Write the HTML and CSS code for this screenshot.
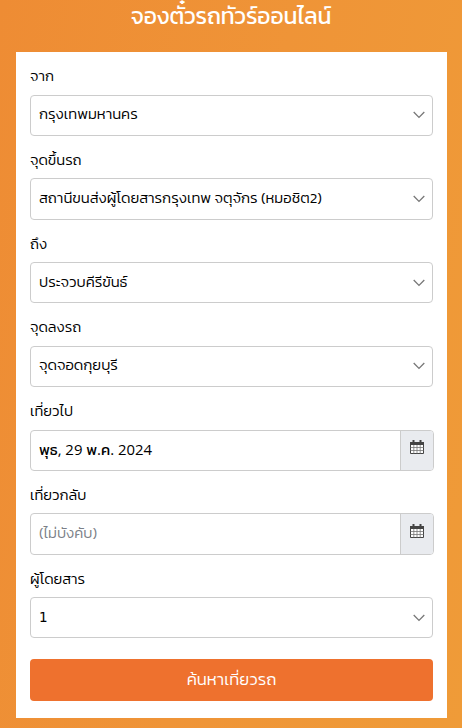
FILE: index.html
```
<!DOCTYPE html>
<html lang="th">

<head>
  <title>จองตั๋วรถทัวร์ออนไลน์</title>
  <meta charset="UTF-8">
  <meta name="viewport" content="width=device-width, initial-scale=1.0">
  <link rel="stylesheet" href="styles.css">
</head>

<body>
  <h1 class="title">จองตั๋วรถทัวร์ออนไลน์</h1>

  <form class="search-form">
    <label class="label" for="from">จาก</label>
    <div class="field">
      <select class="control" id="from">
        <option>กรุงเทพมหานคร</option>
      </select>
      <svg class="chevron" viewBox="0 0 12 8"><path d="M0.7 1 L6 6.4 L11.3 1" /></svg>
    </div>

    <label class="label" for="pickup">จุดขึ้นรถ</label>
    <div class="field">
      <select class="control" id="pickup">
        <option>สถานีขนส่งผู้โดยสารกรุงเทพ จตุจักร (หมอชิต2)</option>
      </select>
      <svg class="chevron" viewBox="0 0 12 8"><path d="M0.7 1 L6 6.4 L11.3 1" /></svg>
    </div>

    <label class="label" for="to">ถึง</label>
    <div class="field">
      <select class="control" id="to">
        <option>ประจวบคีรีขันธ์</option>
      </select>
      <svg class="chevron" viewBox="0 0 12 8"><path d="M0.7 1 L6 6.4 L11.3 1" /></svg>
    </div>

    <label class="label" for="dropoff">จุดลงรถ</label>
    <div class="field">
      <select class="control" id="dropoff">
        <option>จุดจอดกุยบุรี</option>
      </select>
      <svg class="chevron" viewBox="0 0 12 8"><path d="M0.7 1 L6 6.4 L11.3 1" /></svg>
    </div>

    <label class="label" for="depart">เที่ยวไป</label>
    <div class="field field-date">
      <input class="control control-date" type="text" id="depart" value="พุธ, 29 พ.ค. 2024">
      <span class="addon">
        <svg class="calendar" viewBox="0 0 14 14">
          <path class="sheet" d="M0.5 2.5h13v11h-13z" />
          <path class="grid" d="M0.5 7.5h13M0.5 10.5h13M3.8 5v8.5M7 5v8.5M10.2 5v8.5" />
          <path class="top" d="M0 2h14v3H0zM2.5 0h2v3.5h-2zM9.5 0h2v3.5h-2z" />
        </svg>
      </span>
    </div>

    <label class="label" for="return">เที่ยวกลับ</label>
    <div class="field field-date">
      <input class="control" type="text" id="return" placeholder="(ไม่บังคับ)">
      <span class="addon">
        <svg class="calendar" viewBox="0 0 14 14">
          <path class="sheet" d="M0.5 2.5h13v11h-13z" />
          <path class="grid" d="M0.5 7.5h13M0.5 10.5h13M3.8 5v8.5M7 5v8.5M10.2 5v8.5" />
          <path class="top" d="M0 2h14v3H0zM2.5 0h2v3.5h-2zM9.5 0h2v3.5h-2z" />
        </svg>
      </span>
    </div>

    <label class="label" for="passengers">ผู้โดยสาร</label>
    <div class="field">
      <select class="control control-count" id="passengers">
        <option>1</option>
      </select>
      <svg class="chevron" viewBox="0 0 12 8"><path d="M0.7 1 L6 6.4 L11.3 1" /></svg>
    </div>

    <button class="submit" type="button">ค้นหาเที่ยวรถ</button>
  </form>
</body>

</html>
```
FILE: styles.css
```
* {
  box-sizing: border-box;
  font-family: Kanit, Prompt, "Noto Sans Thai", "Noto Sans", sans-serif;
  font-weight: 300;
}

body {
  margin: 0;
  height: 728px;
  overflow: hidden;
  background: linear-gradient(100deg, #ee8c34 0%, #ef9437 50%, #ef9b38 100%);
}

.title {
  margin: 0;
  height: 52px;
  font-size: 22.9px;
  font-weight: 400;
  letter-spacing: -0.1px;
  line-height: 32px;
  text-align: center;
  color: #fff;
}

.search-form {
  display: flex;
  flex-direction: column;
  width: 431px;
  height: 666px;
  margin-left: 16px;
  padding: 0 14px;
  background-color: #fff;
}

.label {
  flex: none;
  height: 42.5px;
  padding-top: 12px;
  font-size: 14.8px;
  line-height: 24px;
  color: #000;
}

.field {
  display: flex;
  flex: none;
  align-items: center;
  height: 41.25px;
  border: 1px solid #ccc;
  border-radius: 4px;
}

.control {
  flex: 1;
  min-width: 0;
  height: 36px;
  padding: 0 8px 2px;
  border: 0;
  outline: 0;
  appearance: none;
  background: none;
  font-size: 14.9px;
  color: #000;
}

.control-date {
  padding: 0 8px;
  font-family: "Open Sans", Kanit, sans-serif;
  font-weight: 390;
}

.control-count {
  font-family: "DejaVu Sans", sans-serif;
  font-size: 13.5px;
  font-weight: 400;
}

.control::placeholder {
  color: #7b7f87;
}

.chevron {
  width: 12px;
  height: 8px;
  margin-right: 7.5px;
  fill: none;
  stroke: #777;
  stroke-width: 1.3;
}

.field-date {
  margin-right: -1px;
}

.addon {
  display: flex;
  justify-content: center;
  align-self: stretch;
  width: 33px;
  padding-top: 9.3px;
  border-left: 1px solid #ccc;
  border-radius: 0 3px 3px 0;
  background-color: #e9ebef;
}

.calendar {
  width: 14px;
  height: 14px;
}

.sheet {
  fill: #fff;
  stroke: #444;
}

.grid {
  fill: none;
  stroke: #777;
  stroke-width: 0.8;
}

.top {
  fill: #444;
}

.submit {
  flex: none;
  height: 42px;
  margin-top: 20.5px;
  padding: 0;
  border: 0;
  border-radius: 4px;
  background-color: #ee712e;
  font-size: 16.8px;
  color: #fff;
}
```
